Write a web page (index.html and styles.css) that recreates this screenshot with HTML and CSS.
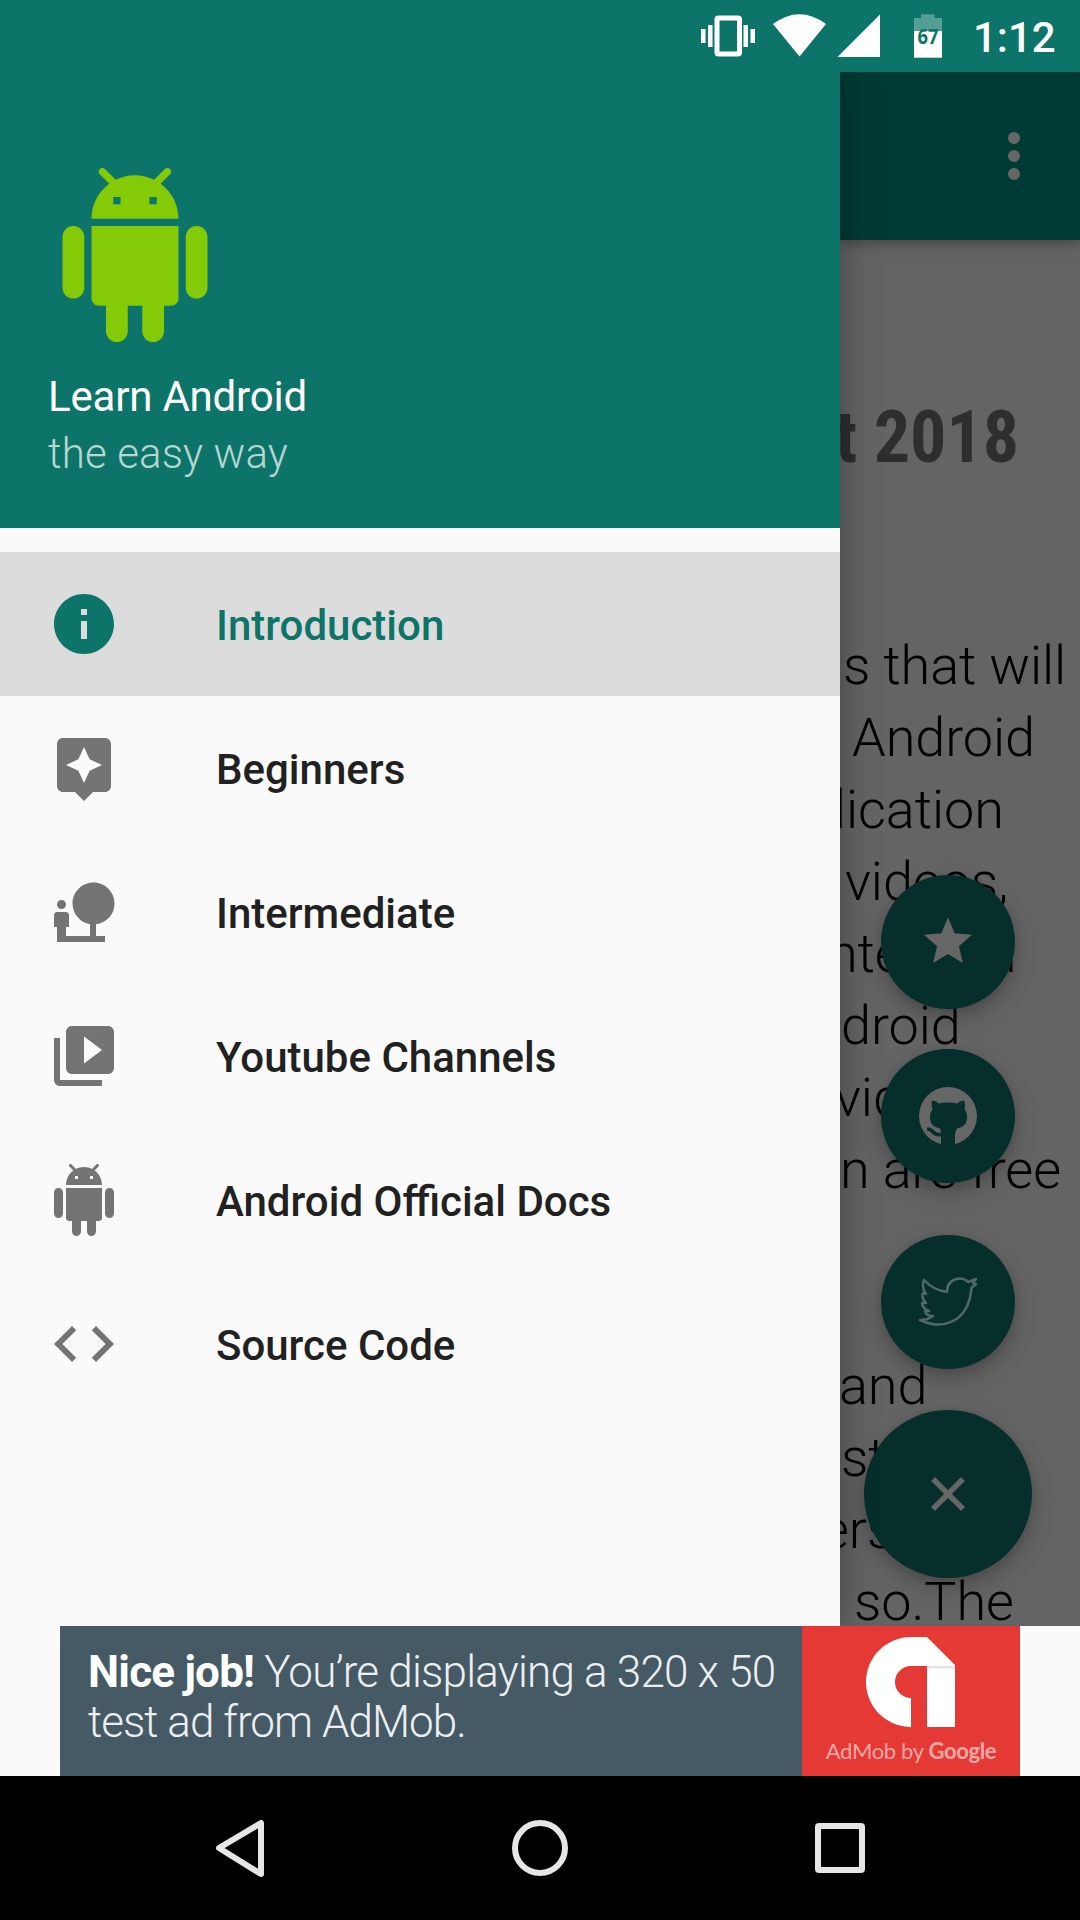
FILE: index.html
```html
<!DOCTYPE html>
<html lang="en">
<head>
<meta charset="utf-8">
<title>Learn Android</title>
<link rel="stylesheet" href="styles.css">
</head>
<body>
<div class="screen">
  <header class="status">
    <svg class="status-icons" width="260" height="72" viewBox="690 0 260 72">
      <path fill="#fff" d="M701 29h4.500v14h-4.500zM708 25h4.500v22h-4.500zM743.500 25h4.500v22h-4.500zM750.500 29h4.500v14h-4.500z"/>
      <rect x="717" y="18" width="22.500" height="36" rx="1.500" fill="none" stroke="#fff" stroke-width="5"/>
      <path fill="#fff" d="M773 24Q799.500 4.500 826 24L799.500 56.500zM880 14.500V57H837.500z"/>
      <path fill="#fff" fill-opacity=".3" d="M921 14.300h13.500V18h7.500v13.300h-28V18h7z"/>
      <path fill="#fff" d="M914 31h28v26.700h-28z"/>
      <text class="battery" x="928" y="44" text-anchor="middle" textLength="21" lengthAdjust="spacingAndGlyphs">67</text>
    </svg>
    <span class="clock">1:12</span>
  </header>

  <main class="stage">
    <section class="page">
      <div class="toolbar">
        <svg width="12" height="48" viewBox="0 0 12 48" fill="#666"><circle cx="6" cy="6" r="6"/><circle cx="6" cy="24" r="6"/><circle cx="6" cy="42" r="6"/></svg>
      </div>
      <div class="article">
        <h1 class="title">t 2018</h1>
        <div class="para">
          <p class="line" style="--x:3px">s that will</p>
          <p class="line" style="--x:12px">Android</p>
          <p class="line" style="--x:-6px">lication</p>
          <p class="line" style="--x:5px">videos,</p>
          <p class="line gap" style="--x:-12px">ntent in</p>
          <p class="line" style="--x:1px">droid</p>
          <p class="line" style="--x:-5px">video</p>
          <p class="line" style="--x:0px">n are free</p>
        </div>
        <div class="para">
          <p class="line" style="--x:-1px">and</p>
          <p class="line" style="--x:1px">st</p>
          <p class="line" style="--x:-19px">ers</p>
          <p class="line" style="--x:14px">so.The</p>
        </div>
      </div>
      <div class="fabs">
        <div class="fab star"><svg width="72" height="72" viewBox="0 0 24 24"><path fill="#666" d="M12 17.270 18.180 21l-1.640-7.030L22 9.240l-7.190-.61L12 2 9.190 8.630 2 9.240l5.460 4.730L5.820 21z" transform="translate(2.400 2.200) scale(.8)"/></svg></div>
        <div class="fab github"><svg width="58" height="58" viewBox="0 0 58 58"><circle cx="29" cy="29" r="29" fill="#666"/><path fill="#062e2a" d="M13 13.500q3-.5 7 3 9-2 18 0 4-3.500 7-3 2 4 .5 8.500 3 4 2.500 10-1 8-10 9.500Q36 44 36 48v11H22V48q0-4-1-6.500-9-1.500-10-9.500-.5-6 2.500-10-1.500-4.500-.5-8.500z"/><path d="M8 42q4 0 6 3 3 3.500 9 2.500" fill="none" stroke="#062e2a" stroke-width="3.500"/></svg></div>
        <div class="fab twitter"><svg width="58" height="50" viewBox="0 0 58 50" fill="none" stroke="#4f6a66" stroke-width="2.500" stroke-linejoin="round"><path d="M5 3Q14 13 28 15 28 3 40 1.500q6 0 9 3.500l8-3-3 4 3 1-4.500 4Q51 31 39 41 22 53 1 43q8 0 13-4-7 0-8-5h4q-7-3-7-8h4q-5-5-3-10l3 1Q2 10 5 3z"/></svg></div>
        <div class="fab close"><svg width="34" height="34" viewBox="0 0 34 34"><path d="M2 2 32 32M32 2 2 32" stroke="#666" stroke-width="5.500"/></svg></div>
      </div>
    </section>

    <aside class="drawer">
      <div class="drawer-head">
        <svg class="logo" width="174" height="174" viewBox="0 0 24 24"><path id="droid" d="M6 18c0 .55.45 1 1 1h1v3.500c0 .83.67 1.500 1.500 1.500s1.500-.67 1.500-1.500V19h2v3.500c0 .83.67 1.500 1.500 1.500s1.500-.67 1.500-1.500V19h1c.55 0 1-.45 1-1V8H6v10zM3.500 8C2.670 8 2 8.670 2 9.500v7c0 .83.67 1.500 1.500 1.500S5 17.330 5 16.500v-7C5 8.670 4.330 8 3.500 8zm17 0c-.83 0-1.500.67-1.500 1.500v7c0 .83.67 1.500 1.500 1.500s1.500-.67 1.500-1.500v-7c0-.83-.67-1.500-1.500-1.500zm-4.970-5.840l1.300-1.300c.2-.2.2-.51 0-.71-.2-.2-.51-.2-.71 0l-1.480 1.480C13.850 1.230 12.950 1 12 1c-.96 0-1.860.23-2.660.63L7.850.15c-.2-.2-.51-.2-.71 0-.2.2-.2.51 0 .71l1.310 1.310C6.970 3.260 6 5.010 6 7h12c0-1.990-.97-3.750-2.470-4.840zM10 5H9V4h1v1zm5 0h-1V4h1v1z"/></svg>
        <div class="name">Learn Android</div>
        <div class="tagline">the easy way</div>
      </div>
      <nav class="menu">
        <a class="item active"><svg class="icon" viewBox="0 0 24 24"><path d="M12 2C6.480 2 2 6.480 2 12s4.480 10 10 10 10-4.480 10-10S17.520 2 12 2zm1 15h-2v-6h2v6zm0-8h-2V7h2v2z"/></svg><span class="label">Introduction</span></a>
        <a class="item"><svg class="icon" viewBox="0 0 24 24"><path d="M19 2H5c-1.100 0-2 .9-2 2v14c0 1.100.9 2 2 2h4l3 3 3-3h4c1.100 0 2-.9 2-2V4c0-1.100-.9-2-2-2zm-5.120 10.880L12 17l-1.880-4.120L6 11l4.120-1.880L12 5l1.880 4.120L18 11l-4.120 1.880z"/></svg><span class="label">Beginners</span></a>
        <a class="item"><svg class="icon" viewBox="0 0 24 24"><path d="M22.170 9.170c0-3.870-3.130-7-7-7s-7 3.130-7 7c0 3.470 2.520 6.340 5.830 6.890V20H6v-3h1v-4c0-.55-.45-1-1-1H3c-.55 0-1 .45-1 1v4h1v5h16v-2h-3v-3.880c3.470-.41 6.170-3.360 6.170-6.950zM4.500 11c.83 0 1.500-.67 1.500-1.500S5.330 8 4.500 8 3 8.670 3 9.500 3.670 11 4.500 11z"/></svg><span class="label">Intermediate</span></a>
        <a class="item"><svg class="icon" viewBox="0 0 24 24"><path d="M4 6H2v14c0 1.100.9 2 2 2h14v-2H4V6zm16-4H8c-1.100 0-2 .9-2 2v12c0 1.100.9 2 2 2h12c1.100 0 2-.9 2-2V4c0-1.100-.9-2-2-2zm-8 12.500v-9l6 4.500-6 4.500z"/></svg><span class="label">Youtube Channels</span></a>
        <a class="item"><svg class="icon" viewBox="0 0 24 24"><use href="#droid"/></svg><span class="label">Android Official Docs</span></a>
        <a class="item"><svg class="icon" viewBox="0 0 24 24"><path d="M9.400 16.600L4.800 12l4.600-4.600L8 6l-6 6 6 6 1.400-1.400zm5.200 0l4.600-4.600-4.600-4.600L16 6l6 6-6 6-1.400-1.400z"/></svg><span class="label">Source Code</span></a>
      </nav>
    </aside>
  </main>

  <section class="ad-strip">
    <div class="ad">
      <p class="ad-text"><span class="ad-line one"><b>Nice job!</b> You’re displaying a 320 x 50</span><span class="ad-line two">test ad from AdMob.</span></p>
      <div class="ad-brand">
        <svg width="90" height="90" viewBox="0 0 90 90"><path fill="#fff" d="M45 0H61L89 28V90H61V29H45A16 16 0 0 0 45 61V90A45 45 0 0 1 45 0z"/><path fill="#e2e2e2" d="M61 29h28v2.500H61z"/></svg>
        <div class="ad-name">AdMob by <b>Google</b></div>
      </div>
    </div>
  </section>

  <footer class="navbar">
    <svg width="1080" height="144" viewBox="0 0 1080 144" fill="none" stroke="#e6e6e6" stroke-width="6" stroke-linejoin="round"><path d="M261 49v51L219 74z" transform="translate(0 -2)"/><circle cx="540" cy="72" r="25"/><rect x="818" y="50" width="44" height="44" rx="1"/></svg>
  </footer>
</div>
</body>
</html>
```

FILE: styles.css
```css
* { box-sizing: border-box; margin: 0; padding: 0; }
body { font-family: Roboto, "Liberation Sans", sans-serif; background: #000; }
svg { display: block; flex: none; }
.screen {
  width: 1080px; height: 1920px; overflow: hidden;
  display: grid; grid-template-rows: 72px 1554px 150px 144px;
}
.status {
  background: #0c7468; display: flex; justify-content: flex-end;
  align-items: center; padding-right: 22px; color: #fff;
}
.status-icons { margin-right: 23px; }
.battery { font: 700 21px "Open Sans", sans-serif; fill: #0c7468; }
.clock { width: 85px; padding-top: 3px; font-size: 42px; font-weight: 500; line-height: 72px; white-space: nowrap; }

.stage { position: relative; overflow: hidden; background: #646464; }
.page { height: 100%; padding-left: 840px; position: relative; }
.toolbar {
  height: 168px; background: #003a34; display: flex; align-items: center;
  justify-content: flex-end; padding-right: 60px; box-shadow: 0 2px 14px rgba(0,0,0,.38);
}
.article { overflow: hidden; height: 1386px; padding-top: 156px; white-space: nowrap; }
.title {
  font-family: "Roboto Condensed", Roboto, sans-serif; font-stretch: 75%;
  font-size: 72px; line-height: 84px; font-weight: 700; color: #2e2e2e; margin-left: -5px;
}
.para { padding-top: 150px; font-size: 54px; line-height: 72px; font-weight: 300; color: #000; letter-spacing: -.1px; }
.para + .para { padding-top: 144px; }
.line { padding-left: 20px; margin-left: calc(var(--x) - 20px); }
.gap { word-spacing: 12px; }
.fabs {
  position: absolute; right: 48px; bottom: 48px; width: 168px;
  display: flex; flex-direction: column; align-items: center;
}
.fab {
  width: 134px; height: 134px; border-radius: 50%; background: #062e2a;
  display: flex; align-items: center; justify-content: center;
  box-shadow: 0 9px 22px rgba(0,0,0,.24), 0 2px 8px rgba(0,0,0,.08);
}
.github { margin-top: 40px; }
.twitter { margin-top: 52px; }
.close { margin-top: 41px; width: 168px; height: 168px; }

.drawer {
  position: absolute; left: 0; top: 0; width: 840px; height: 100%;
  background: #fafafa; box-shadow: 0 0 34px rgba(0,0,0,.34);
}
.drawer-head { height: 456px; background: #0c7468; padding: 96px 48px 0; }
.logo { fill: #85ca06; }
.name { margin-top: 26px; font-size: 42px; line-height: 57px; color: #fff; letter-spacing: -.2px; }
.tagline { font-size: 42px; line-height: 57px; font-weight: 300; color: #b6d6d2; letter-spacing: .15px; }
.menu { padding-top: 24px; }
.item {
  height: 144px; padding-left: 48px; display: flex; align-items: center; gap: 96px;
  font-size: 42px; font-weight: 500; color: #212121;
}
.label { padding-top: 3px; }
.icon { width: 72px; height: 72px; fill: #747474; }
.active { background: #dcdcdc; color: #0c7468; }
.active .icon { fill: #0c7468; }

.ad-strip { background: #fafafa; padding: 0 60px; }
.ad { height: 150px; display: flex; background: #455a64; }
.ad-text {
  width: 742px; padding: 21px 0 0 28px; color: #eceff1; letter-spacing: -.78px;
  font-size: 44px; line-height: 50px; font-weight: 300; white-space: nowrap;
}
.ad-text b { color: #fff; font-weight: 700; }
.ad-line { display: block; }
.two { letter-spacing: -.95px; }
.ad-brand { width: 218px; background: #e53935; display: flex; flex-direction: column; align-items: center; padding-top: 11px; }
.ad-name { margin-top: 10px; font: 400 22px/28px Lato, sans-serif; letter-spacing: -.35px; color: #f7a9a6; white-space: nowrap; }
.ad-name b { font-weight: 700; }
.navbar { background: #000; }
```
